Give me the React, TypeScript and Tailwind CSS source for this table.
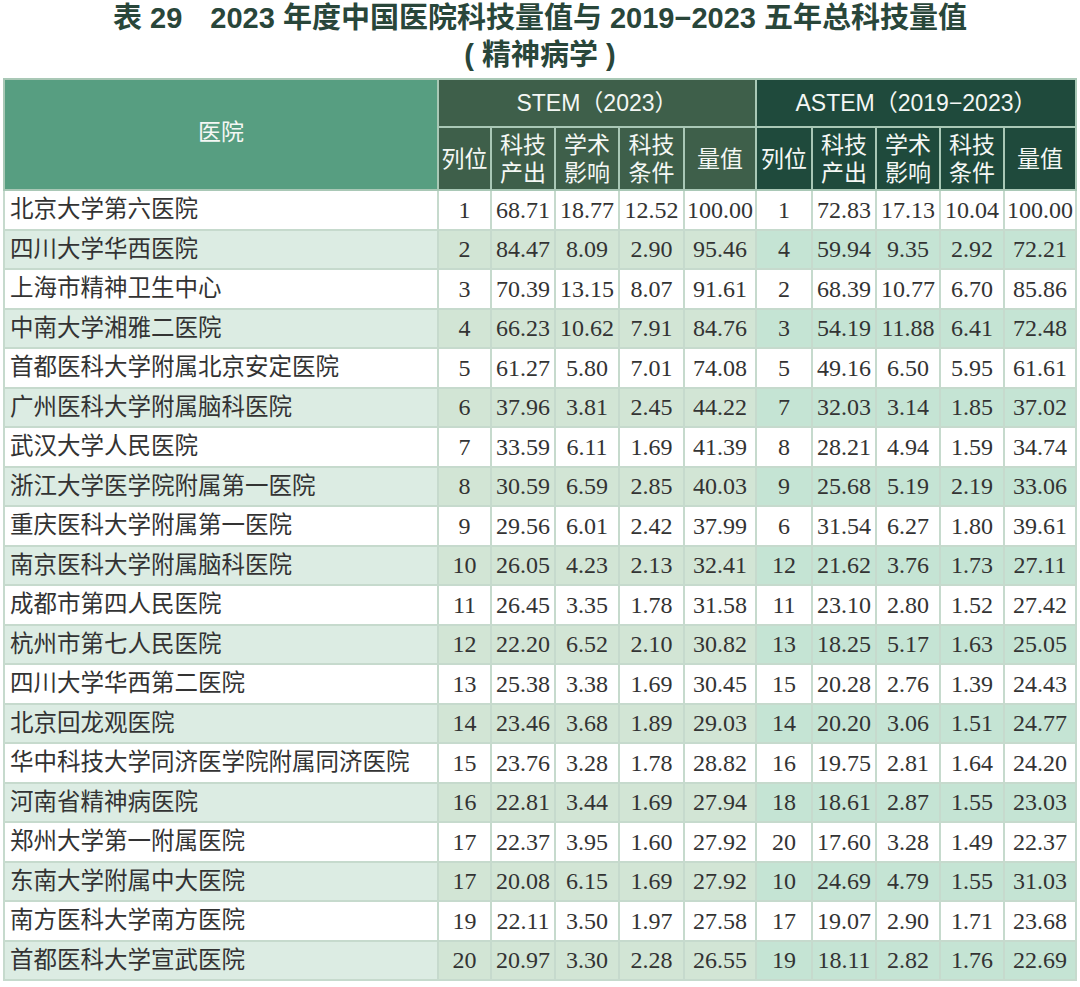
const rows: [string, string[], string[]][] = [
  ["北京大学第六医院", ["1", "68.71", "18.77", "12.52", "100.00"], ["1", "72.83", "17.13", "10.04", "100.00"]],
  ["四川大学华西医院", ["2", "84.47", "8.09", "2.90", "95.46"], ["4", "59.94", "9.35", "2.92", "72.21"]],
  ["上海市精神卫生中心", ["3", "70.39", "13.15", "8.07", "91.61"], ["2", "68.39", "10.77", "6.70", "85.86"]],
  ["中南大学湘雅二医院", ["4", "66.23", "10.62", "7.91", "84.76"], ["3", "54.19", "11.88", "6.41", "72.48"]],
  ["首都医科大学附属北京安定医院", ["5", "61.27", "5.80", "7.01", "74.08"], ["5", "49.16", "6.50", "5.95", "61.61"]],
  ["广州医科大学附属脑科医院", ["6", "37.96", "3.81", "2.45", "44.22"], ["7", "32.03", "3.14", "1.85", "37.02"]],
  ["武汉大学人民医院", ["7", "33.59", "6.11", "1.69", "41.39"], ["8", "28.21", "4.94", "1.59", "34.74"]],
  ["浙江大学医学院附属第一医院", ["8", "30.59", "6.59", "2.85", "40.03"], ["9", "25.68", "5.19", "2.19", "33.06"]],
  ["重庆医科大学附属第一医院", ["9", "29.56", "6.01", "2.42", "37.99"], ["6", "31.54", "6.27", "1.80", "39.61"]],
  ["南京医科大学附属脑科医院", ["10", "26.05", "4.23", "2.13", "32.41"], ["12", "21.62", "3.76", "1.73", "27.11"]],
  ["成都市第四人民医院", ["11", "26.45", "3.35", "1.78", "31.58"], ["11", "23.10", "2.80", "1.52", "27.42"]],
  ["杭州市第七人民医院", ["12", "22.20", "6.52", "2.10", "30.82"], ["13", "18.25", "5.17", "1.63", "25.05"]],
  ["四川大学华西第二医院", ["13", "25.38", "3.38", "1.69", "30.45"], ["15", "20.28", "2.76", "1.39", "24.43"]],
  ["北京回龙观医院", ["14", "23.46", "3.68", "1.89", "29.03"], ["14", "20.20", "3.06", "1.51", "24.77"]],
  ["华中科技大学同济医学院附属同济医院", ["15", "23.76", "3.28", "1.78", "28.82"], ["16", "19.75", "2.81", "1.64", "24.20"]],
  ["河南省精神病医院", ["16", "22.81", "3.44", "1.69", "27.94"], ["18", "18.61", "2.87", "1.55", "23.03"]],
  ["郑州大学第一附属医院", ["17", "22.37", "3.95", "1.60", "27.92"], ["20", "17.60", "3.28", "1.49", "22.37"]],
  ["东南大学附属中大医院", ["17", "20.08", "6.15", "1.69", "27.92"], ["10", "24.69", "4.79", "1.55", "31.03"]],
  ["南方医科大学南方医院", ["19", "22.11", "3.50", "1.97", "27.58"], ["17", "19.07", "2.90", "1.71", "23.68"]],
  ["首都医科大学宣武医院", ["20", "20.97", "3.30", "2.28", "26.55"], ["19", "18.11", "2.82", "1.76", "22.69"]],
];

const subHeads = ["列位", "科技\n产出", "学术\n影响", "科技\n条件", "量值"];
const widths = [434, 53, 64, 64, 65, 72, 56, 64, 64, 64, 72];

const sans = { fontFamily: '"Liberation Sans", "Noto Sans CJK SC", sans-serif' };
const serif = { fontFamily: '"Liberation Serif", "Noto Sans CJK SC", serif' };

function SubHead({ label, dark }: { label: string; dark: boolean }) {
  const parts = label.split("\n");
  return (
    <th
      className={`border-2 border-[#a9c8b6] px-0 font-normal text-[23px] leading-[28px] text-[#f4f7f4] ${dark ? "bg-[#1f4a3c]" : "bg-[#3e5f4a]"}`}
    >
      {parts.map((p) => (
        <div key={p}>{p}</div>
      ))}
    </th>
  );
}

export default function App() {
  return (
    <div className="w-[1080px] h-[987px] bg-white overflow-hidden" style={sans}>
      <div className="flex flex-col items-center text-[#29463a] font-bold text-[29px] leading-[37px]">
        <div>
          表 29<span className="ml-[28px]">2023 年度中国医院科技量值与 2019−2023 五年总科技量值</span>
        </div>
        <div>( 精神病学 )</div>
      </div>
      <table className="ml-[3px] mt-[4px] table-fixed border-collapse border-2 border-[#c6dacd]">
        <colgroup>
          {widths.map((w, i) => (
            <col key={i} style={{ width: w }} />
          ))}
        </colgroup>
        <thead>
          <tr className="h-[48px]">
            <th rowSpan={2} className="border-2 border-[#a9c8b6] bg-[#579e81] font-normal text-[23px] text-[#f4f7f4] pb-[4px]">
              医院
            </th>
            <th colSpan={5} className="border-2 border-[#a9c8b6] bg-[#3e5f4a] font-normal text-[23px] text-[#f4f7f4]">
              STEM（2023）
            </th>
            <th colSpan={5} className="border-2 border-[#a9c8b6] bg-[#1f4a3c] font-normal text-[23px] text-[#f4f7f4]">
              ASTEM（2019−2023）
            </th>
          </tr>
          <tr className="h-[63px]">
            {subHeads.map((s) => (
              <SubHead key={"a" + s} label={s} dark={false} />
            ))}
            {subHeads.map((s) => (
              <SubHead key={"b" + s} label={s} dark={true} />
            ))}
          </tr>
        </thead>
        <tbody>
          {rows.map(([name, stem, astem], i) => {
            const shaded = i % 2 === 1;
            return (
              <tr key={name + i} className="h-[39.5px] text-[#333333]">
                <td
                  className={`border-2 border-[#c6dacd] pl-[5px] text-[23.5px] leading-none whitespace-nowrap ${shaded ? "bg-[#dcece3]" : "bg-white"}`}
                  style={serif}
                >
                  {name}
                </td>
                {stem.map((v, j) => (
                  <td
                    key={"s" + j}
                    className={`border-2 border-[#c6dacd] text-center text-[24px] leading-none ${shaded ? "bg-[#d2e5d5]" : "bg-white"}`}
                    style={serif}
                  >
                    {v}
                  </td>
                ))}
                {astem.map((v, j) => (
                  <td
                    key={"t" + j}
                    className={`border-2 border-[#c6dacd] text-center text-[24px] leading-none ${shaded ? "bg-[#c5e4d4]" : "bg-white"}`}
                    style={serif}
                  >
                    {v}
                  </td>
                ))}
              </tr>
            );
          })}
        </tbody>
      </table>
    </div>
  );
}
